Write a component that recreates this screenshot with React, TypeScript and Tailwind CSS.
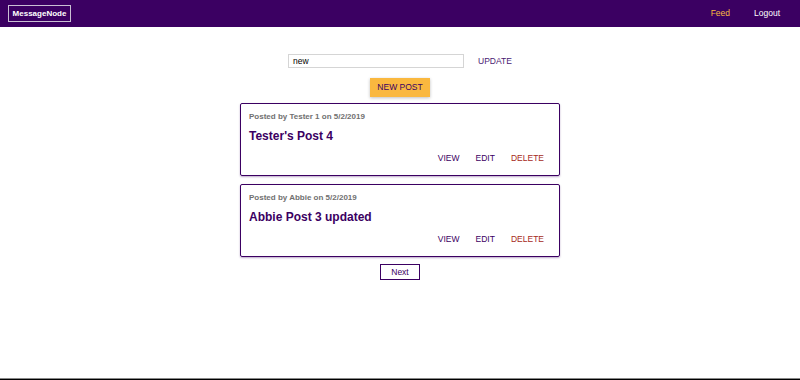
import React from "react";

const posts = [
  { author: "Tester 1", date: "5/2/2019", title: "Tester's Post 4" },
  { author: "Abbie", date: "5/2/2019", title: "Abbie Post 3 updated" },
];

export default function App() {
  return (
    <div className="w-[800px] h-[380px] bg-white flex flex-col overflow-hidden" style={{ fontFamily: '"Liberation Sans", Arial, sans-serif' }}>
      <header className="h-[27px] bg-[#3b0062] flex items-center justify-between px-[8px] shrink-0">
        <div className="border border-[#c9bfd3] w-[63px] h-[17px] flex items-center justify-center text-white font-bold text-[8px]">MessageNode</div>
        <nav className="flex items-center gap-[24px] pr-[12px] text-[8.5px]">
          <span className="text-[#fab83f]">Feed</span>
          <span className="text-white">Logout</span>
        </nav>
      </header>
      <main className="flex-1 flex flex-col items-center pt-[27px]">
        <div className="flex items-center gap-[14px]">
          <div className="w-[176px] h-[14px] border border-[#d5d5d5] px-[4px] flex items-center text-[8.5px] text-black">new</div>
          <span className="text-[8.5px] text-[#4a1a72]">UPDATE</span>
        </div>
        <button className="mt-[10px] w-[60px] h-[19px] bg-[#fab83f] text-[#3b0062] text-[8.5px] shadow-[0_1px_3px_rgba(0,0,0,0.25)]">NEW POST</button>
        <div className="mt-[6px] flex flex-col gap-[8px]">
          {posts.map((p) => (
            <article key={p.title} className="w-[320px] h-[73px] border border-[#3b0062] rounded-[2px] shadow-[0_1px_2px_rgba(59,0,98,0.35)] px-[8px] pt-[7px]">
              <div className="text-[8px] font-bold text-[#707070] leading-[11px]">Posted by {p.author} on {p.date}</div>
              <h1 className="mt-[6px] text-[12px] font-bold text-[#3b0062] leading-[16px]">{p.title}</h1>
              <div className="mt-[9px] flex justify-end gap-[16px] pr-[7px] text-[8.5px] leading-[11px]">
                <span className="text-[#3b0062]">VIEW</span>
                <span className="text-[#3b0062]">EDIT</span>
                <span className="text-[#a62a22]">DELETE</span>
              </div>
            </article>
          ))}
        </div>
        <button className="mt-[7px] w-[40px] h-[16px] border border-[#3b0062] text-[8.5px] text-[#3b0062] leading-none">Next</button>
      </main>
      <div className="h-[2px] bg-[#888] border-b border-black shrink-0"></div>
    </div>
  );
}
